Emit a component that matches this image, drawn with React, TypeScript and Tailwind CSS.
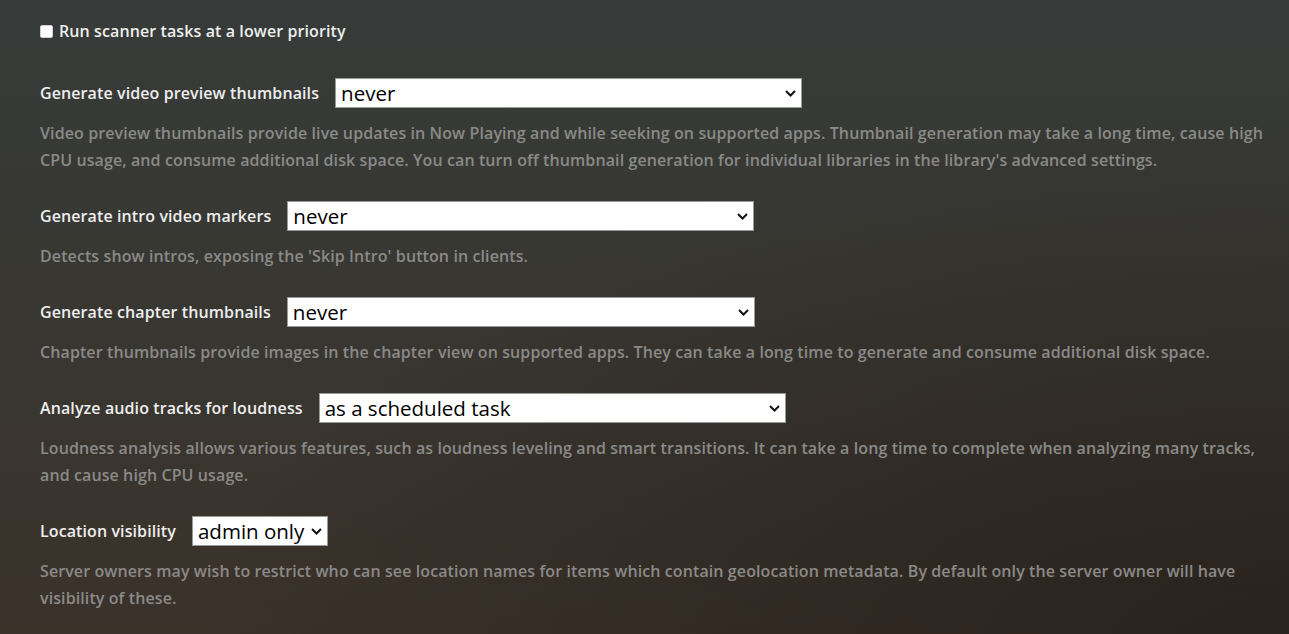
import React from "react";

const settings = [
  {
    label: "Generate video preview thumbnails",
    value: "never",
    width: "w-[467px]",
    help: "Video preview thumbnails provide live updates in Now Playing and while seeking on supported apps. Thumbnail generation may take a long time, cause high CPU usage, and consume additional disk space. You can turn off thumbnail generation for individual libraries in the library's advanced settings.",
  },
  {
    label: "Generate intro video markers",
    value: "never",
    width: "w-[467px]",
    help: "Detects show intros, exposing the 'Skip Intro' button in clients.",
  },
  {
    label: "Generate chapter thumbnails",
    value: "never",
    width: "w-[468px]",
    help: "Chapter thumbnails provide images in the chapter view on supported apps. They can take a long time to generate and consume additional disk space.",
  },
  {
    label: "Analyze audio tracks for loudness",
    value: "as a scheduled task",
    width: "w-[467px]",
    help: "Loudness analysis allows various features, such as loudness leveling and smart transitions. It can take a long time to complete when analyzing many tracks, and cause high CPU usage.",
  },
  {
    label: "Location visibility",
    value: "admin only",
    width: "w-[136px]",
    help: "Server owners may wish to restrict who can see location names for items which contain geolocation metadata. By default only the server owner will have visibility of these.",
  },
];

function Chevron() {
  return (
    <svg width="11" height="7" viewBox="0 0 11 7" className="shrink-0">
      <path d="M1 1l4.5 4.5L10 1" fill="none" stroke="#111" strokeWidth="2" />
    </svg>
  );
}

function FakeSelect({ value, width }: { value: string; width: string }) {
  return (
    <div
      className={`${width} h-[30px] bg-white border border-[#9a9a9a] flex items-center justify-between pl-[5px] pr-[5px] text-[20.5px] tracking-normal leading-none text-black font-normal`}
    >
      <span className="whitespace-nowrap">{value}</span>
      <Chevron />
    </div>
  );
}

export default function App() {
  return (
    <div
      className="min-h-[634px] w-full pl-10 pr-5 pt-[18px] pb-6 font-['Open_Sans',sans-serif] font-semibold text-[16px] tracking-[0.1px] bg-[radial-gradient(ellipse_at_100%_100%,rgba(20,14,10,0.45),transparent_60%),linear-gradient(180deg,#373b39_0%,#383732_45%,#3b3129_100%)]"
    >
      {/* scanner priority */}
      <label className="flex items-center gap-[6px] h-[26px] text-[#eeeeee]">
        <span className="w-[13px] h-[13px] bg-white rounded-[2px] border border-[#cfcfcf]" />
        Run scanner tasks at a lower priority
      </label>

      <div className="mt-[34px]">
        {settings.map((s) => (
          <div key={s.label} className="mb-[27px]">
            <div className="flex items-center gap-4">
              <span className="text-[#eeeeee] whitespace-nowrap">{s.label}</span>
              <FakeSelect value={s.value} width={s.width} />
            </div>
            <p className="mt-[12px] leading-[27px] text-[#8a8a88]">{s.help}</p>
          </div>
        ))}
      </div>
    </div>
  );
}
